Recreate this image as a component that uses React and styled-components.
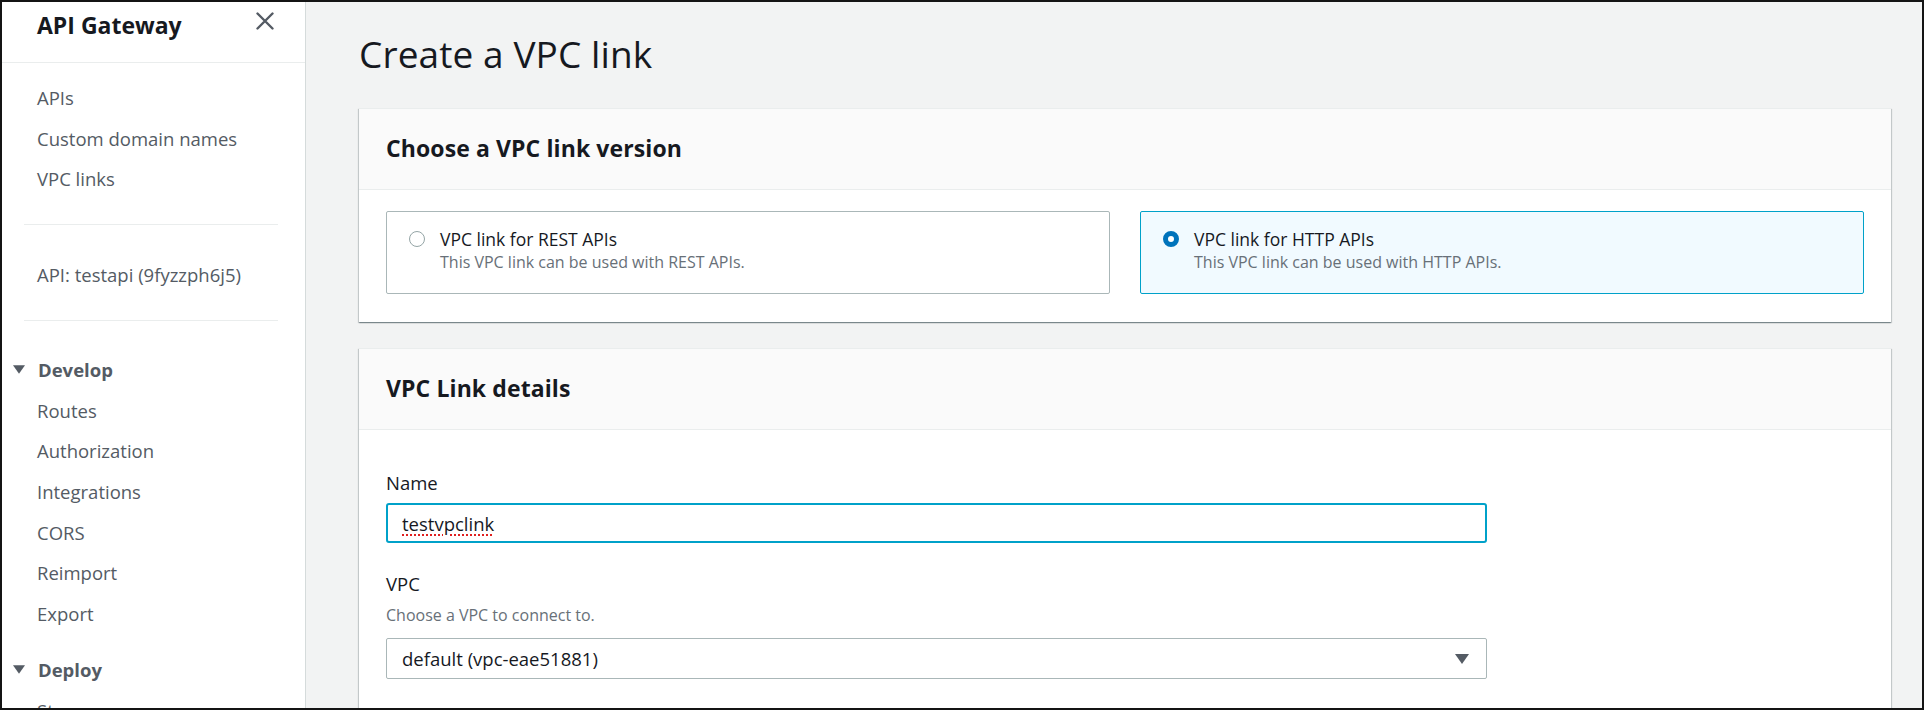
import React from 'react';
import styled, { createGlobalStyle } from 'styled-components';

const GlobalStyle = createGlobalStyle`
  html, body {
    margin: 0;
    padding: 0;
    background: #ffffff;
  }
  * {
    box-sizing: border-box;
  }
`;

const Frame = styled.div`
  width: 1924px;
  height: 710px;
  border: 2px solid #141414;
  overflow: hidden;
  display: flex;
  font-family: 'Open Sans', 'Liberation Sans', sans-serif;
  color: #16191f;
`;

// Left navigation
const Sidebar = styled.nav`
  width: 304px;
  flex-shrink: 0;
  background: #ffffff;
  border-right: 1px solid #d5dbdb;
`;

const SideHeader = styled.div`
  height: 61px;
  display: flex;
  align-items: flex-start;
  justify-content: space-between;
  padding: 8px 30px 0 35px;
  border-bottom: 1px solid #eaeded;
`;

const SideTitle = styled.h2`
  margin: 0;
  font-size: 23px;
  line-height: 30px;
  font-weight: 700;
  color: #16191f;
`;

const CloseButton = styled.button`
  border: 0;
  background: none;
  padding: 0;
  width: 20px;
  height: 22px;
  display: flex;
  align-items: center;
  justify-content: center;
  cursor: pointer;
`;

const NavList = styled.ul`
  list-style: none;
  margin: 0;
  padding: ${p => p.$pad || '0'};
`;

const NavItem = styled.li`
  height: 40.7px;
  display: flex;
  align-items: center;
  padding-left: 35px;
  font-size: 18.5px;
  color: #545b64;
  white-space: nowrap;
`;

const Divider = styled.hr`
  border: 0;
  border-top: 1px solid #eaeded;
  margin: 0 27px 0 22px;
`;

const SectionHead = styled.div`
  height: 40px;
  display: flex;
  align-items: center;
  gap: 13px;
  padding-left: 11px;
  margin-top: ${p => p.$top || '0'};
  font-size: 18.5px;
  font-weight: 700;
  color: #545b64;
`;

// Main content
const Main = styled.main`
  flex: 1;
  background: #f2f3f3;
  padding: 21px 31px 0 53px;
  display: flex;
  flex-direction: column;
  gap: 24px;
`;

const PageTitle = styled.h1`
  margin: 0;
  height: 61px;
  flex-shrink: 0;
  display: flex;
  align-items: center;
  font-size: 37px;
  font-weight: 400;
  letter-spacing: 0.1px;
  color: #16191f;
`;

const Panel = styled.section`
  background: #ffffff;
  border-top: 1px solid #eaeded;
  box-shadow: 0 1px 1px 0 rgba(0, 28, 36, 0.3), 1px 1px 1px 0 rgba(0, 28, 36, 0.15),
    -1px 1px 1px 0 rgba(0, 28, 36, 0.15);
  flex-shrink: 0;
  margin-top: ${p => p.$mt || '0'};
`;

const PanelHeader = styled.div`
  height: 81px;
  display: flex;
  align-items: center;
  padding: 0 27px 2px;
  background: #fafafa;
  border-bottom: 1px solid #eaeded;
`;

const PanelTitle = styled.h2`
  margin: 0;
  font-size: 23px;
  font-weight: 700;
  letter-spacing: 0.1px;
  color: #16191f;
`;

const PanelBody = styled.div`
  padding: ${p => p.$pad || '21px 27px 28px'};
`;

const TileGrid = styled.div`
  display: grid;
  grid-template-columns: 1fr 1fr;
  gap: 30px;
`;

const Tile = styled.label`
  height: 83px;
  display: flex;
  align-items: flex-start;
  gap: 15px;
  padding: 14px 22px 0;
  border: 1px solid ${p => (p.$selected ? '#00a1c9' : '#aab7b8')};
  background: ${p => (p.$selected ? '#f1faff' : '#ffffff')};
  border-radius: 2px;
  cursor: pointer;
`;

const Radio = styled.span`
  width: 16px;
  height: 16px;
  margin-top: 5px;
  border-radius: 50%;
  flex-shrink: 0;
  background: #ffffff;
  border: ${p => (p.$checked ? '5px solid #0073bb' : '1.5px solid #95a5a6')};
`;

const TileText = styled.div`
  display: flex;
  flex-direction: column;
`;

const TileLabel = styled.span`
  font-size: 17.5px;
  line-height: 26px;
  color: #16191f;
`;

const TileDesc = styled.span`
  font-size: 16px;
  line-height: 20px;
  color: #687078;
`;

const Field = styled.div`
  display: flex;
  flex-direction: column;
  margin-bottom: ${p => p.$mb || '0'};
`;

const FieldLabel = styled.span`
  font-size: 18.5px;
  line-height: 26px;
  color: #16191f;
  margin-bottom: 7px;
`;

const FieldDesc = styled.span`
  font-size: 16px;
  line-height: 20px;
  color: #687078;
  margin: 1px 0 13px;
`;

const TextBox = styled.div`
  width: 1101px;
  height: 40px;
  display: flex;
  align-items: center;
  padding: 0 14px;
  border: 2px solid #00a1c9;
  border-radius: 3px;
  font-size: 18.5px;
  color: #16191f;
`;

const Misspelled = styled.span`
  text-decoration: underline dotted #e02020;
  text-decoration-thickness: 2px;
  text-underline-offset: 4px;
`;

const SelectBox = styled.div`
  width: 1101px;
  height: 41px;
  display: flex;
  align-items: center;
  justify-content: space-between;
  padding: 0 17px 0 15px;
  border: 1px solid #aab7b8;
  border-radius: 2px;
  font-size: 18.5px;
  color: #16191f;
`;

const CaretDown = ({ w = 14, h = 10, color = '#545b64' }) => (
  <svg width={w} height={h} viewBox="0 0 14 10">
    <path d="M0 0 H14 L7 10 Z" fill={color} />
  </svg>
);

const CloseIcon = () => (
  <svg width="18" height="18" viewBox="0 0 18 18">
    <path d="M1.5 1.5 L16.5 16.5 M16.5 1.5 L1.5 16.5" stroke="#545b64" strokeWidth="2.4" strokeLinecap="round" />
  </svg>
);

const mainLinks = ['APIs', 'Custom domain names', 'VPC links'];
const developLinks = ['Routes', 'Authorization', 'Integrations', 'CORS', 'Reimport', 'Export'];

const App = () => {
  return (
    <>
      <GlobalStyle />
      <Frame>
        <Sidebar>
          <SideHeader>
            <SideTitle>API Gateway</SideTitle>
            <CloseButton aria-label="Close navigation">
              <CloseIcon />
            </CloseButton>
          </SideHeader>
          <NavList $pad="14px 0 25px">
            {mainLinks.map(l => (
              <NavItem key={l}>{l}</NavItem>
            ))}
          </NavList>
          <Divider />
          <NavList $pad="29px 0 25px">
            <NavItem>API: testapi (9fyzzph6j5)</NavItem>
          </NavList>
          <Divider />
          <SectionHead $top="29px">
            <CaretDown w={12} h={9} />
            Develop
          </SectionHead>
          <NavList>
            {developLinks.map(l => (
              <NavItem key={l}>{l}</NavItem>
            ))}
          </NavList>
          <SectionHead $top="16px">
            <CaretDown w={12} h={9} />
            Deploy
          </SectionHead>
          <NavList>
            <NavItem>Stages</NavItem>
          </NavList>
        </Sidebar>

        <Main>
          <PageTitle>Create a VPC link</PageTitle>

          <Panel>
            <PanelHeader>
              <PanelTitle>Choose a VPC link version</PanelTitle>
            </PanelHeader>
            <PanelBody>
              <TileGrid>
                <Tile>
                  <Radio />
                  <TileText>
                    <TileLabel>VPC link for REST APIs</TileLabel>
                    <TileDesc>This VPC link can be used with REST APIs.</TileDesc>
                  </TileText>
                </Tile>
                <Tile $selected>
                  <Radio $checked />
                  <TileText>
                    <TileLabel>VPC link for HTTP APIs</TileLabel>
                    <TileDesc>This VPC link can be used with HTTP APIs.</TileDesc>
                  </TileText>
                </Tile>
              </TileGrid>
            </PanelBody>
          </Panel>

          <Panel $mt="2px">
            <PanelHeader>
              <PanelTitle>VPC Link details</PanelTitle>
            </PanelHeader>
            <PanelBody $pad="40px 27px 30px">
              <Field $mb="28px">
                <FieldLabel>Name</FieldLabel>
                <TextBox>
                  <Misspelled>testvpclink</Misspelled>
                </TextBox>
              </Field>
              <Field>
                <FieldLabel>VPC</FieldLabel>
                <FieldDesc>Choose a VPC to connect to.</FieldDesc>
                <SelectBox>
                  <span>default (vpc-eae51881)</span>
                  <CaretDown />
                </SelectBox>
              </Field>
            </PanelBody>
          </Panel>
        </Main>
      </Frame>
    </>
  );
};

export default App;
